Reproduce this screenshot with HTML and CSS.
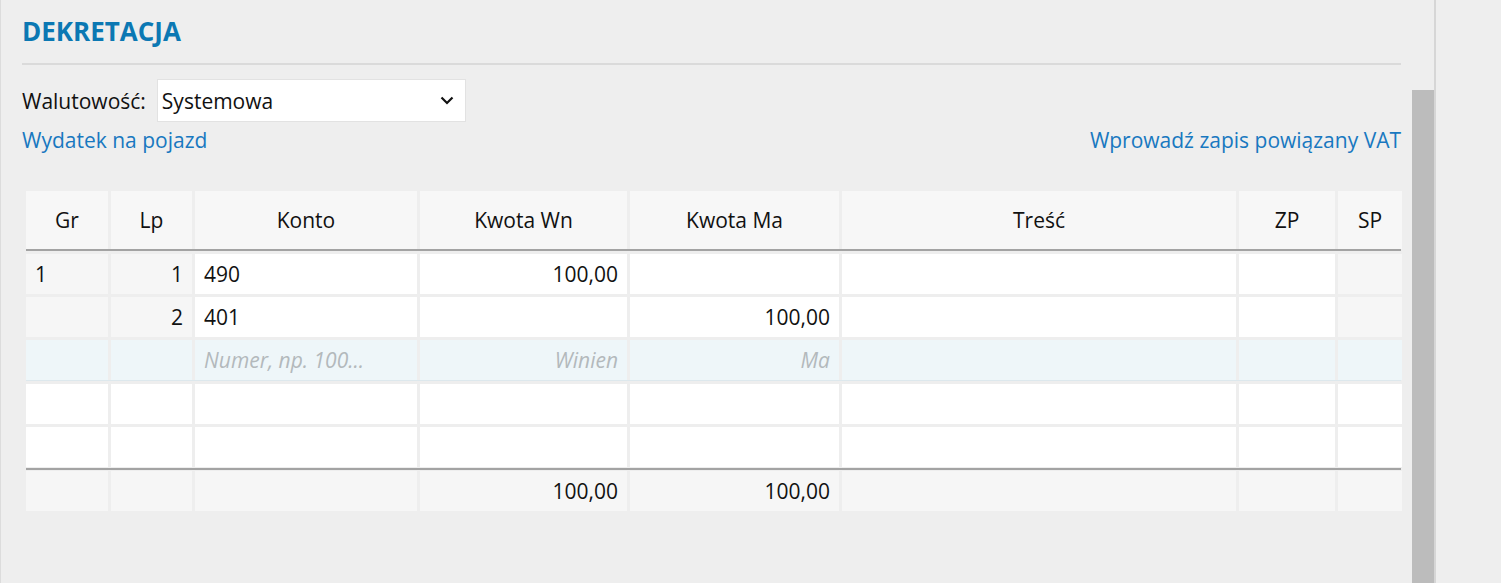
FILE: index.html
```html
<!DOCTYPE html>
<html lang="pl">
<head>
<meta charset="utf-8">
<title>Dekretacja</title>
<link rel="stylesheet" href="styles.css">
</head>
<body>
<div class="screen">
  <main class="panel">
    <h1 class="title">DEKRETACJA</h1>
    <div class="rule"></div>
    <div class="currency">
      <span class="currency-label">Walutowość:</span>
      <div class="select">
        <span class="select-value">Systemowa</span>
        <svg class="chevron" width="14" height="9" viewBox="0 0 14 9"><path d="M1.5 1.5 L7 7 L12.5 1.5" fill="none" stroke="#111" stroke-width="2.2"/></svg>
      </div>
    </div>
    <div class="links">
      <a class="link">Wydatek na pojazd</a>
      <a class="link">Wprowadź zapis powiązany VAT</a>
    </div>
    <div class="grid">
      <div class="row head">
        <div class="c">Gr</div><div class="c">Lp</div><div class="c">Konto</div><div class="c">Kwota Wn</div><div class="c">Kwota Ma</div><div class="c">Treść</div><div class="c">ZP</div><div class="c">SP</div>
      </div>
      <div class="line"></div>
      <div class="row data">
        <div class="c ro left">1</div><div class="c ro right">1</div><div class="c left">490</div><div class="c right">100,00</div><div class="c"></div><div class="c"></div><div class="c"></div><div class="c ro"></div>
      </div>
      <div class="row data">
        <div class="c ro"></div><div class="c ro right">2</div><div class="c left">401</div><div class="c"></div><div class="c right">100,00</div><div class="c"></div><div class="c"></div><div class="c ro"></div>
      </div>
      <div class="row data active">
        <div class="c"></div><div class="c"></div><div class="c left ph">Numer, np. 100...</div><div class="c right ph">Winien</div><div class="c right ph">Ma</div><div class="c"></div><div class="c"></div><div class="c"></div>
      </div>
      <div class="row data">
        <div class="c"></div><div class="c"></div><div class="c"></div><div class="c"></div><div class="c"></div><div class="c"></div><div class="c"></div><div class="c"></div>
      </div>
      <div class="row data">
        <div class="c"></div><div class="c"></div><div class="c"></div><div class="c"></div><div class="c"></div><div class="c"></div><div class="c"></div><div class="c"></div>
      </div>
      <div class="line foot-line"></div>
      <div class="row foot">
        <div class="c"></div><div class="c"></div><div class="c"></div><div class="c right">100,00</div><div class="c right">100,00</div><div class="c"></div><div class="c"></div><div class="c"></div>
      </div>
    </div>
  </main>
  <div class="scrolltrack"><div class="thumb"></div></div>
  <div class="divider"></div>
  <div class="side"></div>
</div>
</body>
</html>
```

FILE: styles.css
```css
* { box-sizing: border-box; }
html, body { margin: 0; padding: 0; }
body {
  background: #eeeeee;
  font-family: "Open Sans", "Noto Sans", sans-serif;
  color: #111;
  width: 1501px;
  height: 583px;
  overflow: hidden;
}
.screen {
  display: flex;
  height: 583px;
}
.panel {
  width: 1412px;
  flex: none;
  padding: 0 11px 0 21px;
  border-left: 1px solid #dcdcdc;
}
.title {
  margin: 0;
  padding-top: 15px;
  height: 63px;
  font-size: 26px;
  line-height: 32px;
  font-weight: 700;
  color: #0b78b3;
  letter-spacing: 0;
}
.rule {
  height: 2px;
  background: #dadada;
}
.currency {
  display: flex;
  align-items: center;
  gap: 11px;
  margin-top: 14px;
}
.currency-label { font-size: 21px; }
.select {
  width: 309px;
  height: 43px;
  background: #fff;
  border: 1px solid #e2e2e2;
  display: flex;
  align-items: center;
  justify-content: space-between;
  padding: 0 11px 0 4px;
  font-size: 21px;
}
.chevron { display: block; }
.links {
  display: flex;
  justify-content: space-between;
  margin-top: 2px;
  line-height: 32px;
}
.link {
  color: #1878c0;
  font-size: 21px;
}
.grid {
  margin: 35px 0 0 4px;
}
.row {
  display: grid;
  grid-template-columns: 82px 81px 222px 207px 209px 394px 96px 64px;
  column-gap: 3px;
  font-size: 21px;
}
.row .c {
  display: flex;
  align-items: center;
  justify-content: center;
  padding: 0 9px;
  white-space: nowrap;
}
.head .c { height: 58px; background: #f7f7f7; }
.line { height: 2px; background: #a3a3a3; }
.data { margin-top: 3px; }
.data .c { height: 40px; background: #fff; }
.data .c.ro { background: #f6f6f6; }
.data.active .c { background: #eef6f9; }
.data.active { border-bottom: 1px solid #dde8ed; }
.c.left { justify-content: flex-start; }
.c.right { justify-content: flex-end; }
.c.ph { color: #b3b9bc; font-style: italic; }
.foot-line { margin-top: 1px; }
.foot .c { height: 40px; background: #f6f6f6; margin-top: 1px; }
.scrolltrack {
  width: 22px;
  flex: none;
  padding-top: 90px;
}
.thumb {
  height: 493px;
  background: #bcbcbc;
}
.divider {
  width: 2px;
  flex: none;
  background: #d6d6d6;
}
.side { flex: 1; }
```
